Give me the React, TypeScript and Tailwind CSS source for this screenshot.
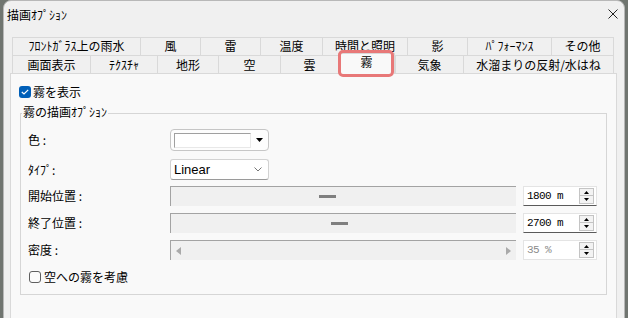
import React from "react";

const row1 = [
  { t: "ﾌﾛﾝﾄｶﾞﾗｽ上の雨水", w: "w-[128px]" },
  { t: "風", w: "w-[60px]" },
  { t: "雷", w: "w-[60px]" },
  { t: "温度", w: "w-[62px]" },
  { t: "時間と照明", w: "w-[85px]" },
  { t: "影", w: "w-[60px]" },
  { t: "ﾊﾟﾌｫｰﾏﾝｽ", w: "w-[84px]" },
  { t: "その他", w: "w-[63px]" },
];

const row2a = [
  { t: "画面表示", w: "w-[78px]" },
  { t: "ﾃｸｽﾁｬ", w: "w-[67px]" },
  { t: "地形", w: "w-[61px]" },
  { t: "空", w: "w-[62px]" },
  { t: "雲", w: "w-[58px]" },
];
const row2b = [
  { t: "気象", w: "w-[68px]" },
  { t: "水溜まりの反射/水はね", w: "w-[151px]" },
];

function Tab({ t, w, last, top }: { t: string; w: string; last?: boolean; top?: boolean }) {
  return (
    <div
      className={`${w} h-[18px] shrink-0 flex justify-center border-l border-t border-[#d9d9d9] bg-[#f0f0f0] leading-[12px] ${
        last ? "border-r" : ""
      } ${top ? "items-start pt-[2px]" : "items-center"}`}
    >
      {t}
    </div>
  );
}

function Spin({ value, disabled }: { value: string; disabled?: boolean }) {
  return (
    <div
      className={`ml-[7px] w-[74px] h-[20px] bg-white border border-[#e4e4e4] flex items-center ${
        disabled ? "" : "border-b-[#5a5a5a]"
      }`}
    >
      <span
        className={`pl-[3px] font-['Liberation_Mono',monospace] text-[11px] tracking-[-0.6px] leading-[12px] ${
          disabled ? "text-[#8c8c8c]" : "text-black"
        }`}
      >
        {value}
      </span>
      <div className="ml-auto mr-[2px] flex flex-col w-[15px]">
        <div className="h-[8px] bg-[#f3f3f3] border border-[#c4c4c4] flex items-center justify-center">
          <svg width="5" height="3" viewBox="0 0 5 3">
            <path d="M2.5 0 L5 3 L0 3 Z" fill="#000" />
          </svg>
        </div>
        <div className="h-[8px] bg-[#f3f3f3] border border-t-0 border-[#c4c4c4] flex items-center justify-center">
          <svg width="5" height="3" viewBox="0 0 5 3">
            <path d="M0 0 L5 0 L2.5 3 Z" fill="#000" />
          </svg>
        </div>
      </div>
    </div>
  );
}

export default function App() {
  return (
    <div className="w-[628px] h-[318px] overflow-hidden bg-[#707570] flex font-['Noto_Sans_CJK_JP',sans-serif] text-[12px] text-black">
      <div className="ml-[3px] w-[622px] h-[340px] shrink-0 bg-[#f0f0f0] rounded-t-[8px] border border-[#b8b8b8] flex flex-col">
        {/* Title bar */}
        <div className="h-[29px] flex items-center justify-between pl-[3px] pr-[6px]">
          <span className="leading-[14px] -mt-[2px]">描画ｵﾌﾟｼｮﾝ</span>
          <svg width="10" height="10" viewBox="0 0 10 10" className="-mt-[4px]">
            <path d="M0.5 0.5 L9.5 9.5 M9.5 0.5 L0.5 9.5" stroke="#222" strokeWidth="1" />
          </svg>
        </div>

        {/* Tabs */}
        <div className="mt-[7px] ml-[8px] flex flex-col">
          <div className="flex">
            {row1.map((r, i) => (
              <Tab key={r.t} t={r.t} w={r.w} top last={i === row1.length - 1} />
            ))}
          </div>
          <div className="flex h-[18px] items-start">
            {row2a.map((r) => (
              <Tab key={r.t} t={r.t} w={r.w} />
            ))}
            <div className="relative z-10 w-[57px] h-[21px] -mt-[2px] shrink-0 bg-[#f9f9f9] border-l border-t border-r border-[#d9d9d9] flex justify-center pt-[1px] leading-[13px]">
              霧
              <div className="absolute left-[-1px] top-[-4px] w-[56px] h-[27px] border-[3px] border-[#e87878] rounded-[5px]" />
            </div>
            {row2b.map((r, i) => (
              <Tab key={r.t} t={r.t} w={r.w} last={i === row2b.length - 1} />
            ))}
          </div>
        </div>

        {/* Panel */}
        <div className="ml-[6px] w-[607px] h-[260px] shrink-0 bg-[#f9f9f9] border border-[#d9d9d9] flex flex-col">
          <div className="mt-[11px] ml-[8px] flex items-center h-[13px]">
            <div className="w-[12px] h-[12px] rounded-[3px] bg-[#005fb8] flex items-center justify-center">
              <svg width="8" height="6" viewBox="0 0 8 6">
                <path d="M0.8 3 L3 5 L7.2 0.8" stroke="#fff" strokeWidth="1.2" fill="none" />
              </svg>
            </div>
            <span className="ml-[2px] leading-[14px]">霧を表示</span>
          </div>

          {/* Group box */}
          <div className="relative mt-[15px] ml-[9px] w-[587px] h-[182px] border border-[#d6d6d6] flex flex-col pl-[7px]">
            <span className="absolute -top-[9px] left-[1px] px-[1px] bg-[#f9f9f9] leading-[14px]">
              霧の描画ｵﾌﾟｼｮﾝ
            </span>

            {/* Color */}
            <div className="mt-[15px] flex items-center h-[22px]">
              <span className="w-[142px] leading-[14px]">色 :</span>
              <div className="w-[99px] h-[22px] rounded-[4px] border border-[#c6c6c6] bg-[#fdfdfd] flex items-center pl-[3px]">
                <div className="w-[77px] h-[15px] bg-white border-t border-l border-[#a0a0a0] border-b border-r border-b-[#e8e8e8] border-r-[#e8e8e8]" />
                <svg width="7" height="4" viewBox="0 0 7 4" className="ml-[5px]">
                  <path d="M0 0 L7 0 L3.5 4 Z" fill="#000" />
                </svg>
              </div>
            </div>

            {/* Type */}
            <div className="mt-[8px] flex items-center h-[21px]">
              <span className="w-[142px] leading-[14px]">ﾀｲﾌﾟ:</span>
              <div className="w-[99px] h-[21px] rounded-[3px] border border-[#d2d2d2] border-b-[#9a9a9a] bg-white flex items-center pl-[3px] pr-[6px]">
                <span className="font-['Liberation_Sans',sans-serif] text-[13px] leading-[14px]">Linear</span>
                <svg width="8" height="5" viewBox="0 0 8 5" className="ml-auto">
                  <path d="M0.5 0.5 L4 4 L7.5 0.5" stroke="#777" strokeWidth="1" fill="none" />
                </svg>
              </div>
            </div>

            {/* Start */}
            <div className="mt-[6px] flex items-center h-[20px]">
              <span className="w-[142px] leading-[14px]">開始位置 :</span>
              <div className="w-[346px] h-[20px] bg-[#f0f0f0] border-t border-l border-[#a3a3a3] flex items-center">
                <div className="ml-[148px] w-[17px] h-[3px] bg-[#7f7f7f]" />
              </div>
              <Spin value="1800 m" />
            </div>

            {/* End */}
            <div className="mt-[7px] flex items-center h-[20px]">
              <span className="w-[142px] leading-[14px]">終了位置 :</span>
              <div className="w-[346px] h-[20px] bg-[#f0f0f0] border-t border-l border-[#a3a3a3] flex items-center">
                <div className="ml-[160px] w-[17px] h-[3px] bg-[#7f7f7f]" />
              </div>
              <Spin value="2700 m" />
            </div>

            {/* Density */}
            <div className="mt-[7px] flex items-center h-[20px]">
              <span className="w-[142px] leading-[14px]">密度 :</span>
              <div className="w-[346px] h-[20px] bg-[#f0f0f0] border-t border-l border-[#a3a3a3] flex items-center px-[5px]">
                <svg width="5" height="8" viewBox="0 0 5 8">
                  <path d="M5 0 L5 8 L0 4 Z" fill="#a9a9a9" />
                </svg>
                <svg width="5" height="8" viewBox="0 0 5 8" className="ml-auto">
                  <path d="M0 0 L0 8 L5 4 Z" fill="#a9a9a9" />
                </svg>
              </div>
              <Spin value="35 %" disabled />
            </div>

            {/* Sky checkbox */}
            <div className="mt-[10px] ml-[1px] flex items-center h-[13px]">
              <div className="w-[12px] h-[12px] rounded-[3px] border border-[#5f5f5f] bg-[#fbfbfb]" />
              <span className="ml-[3px] leading-[14px]">空への霧を考慮</span>
            </div>
          </div>
        </div>
      </div>
    </div>
  );
}
